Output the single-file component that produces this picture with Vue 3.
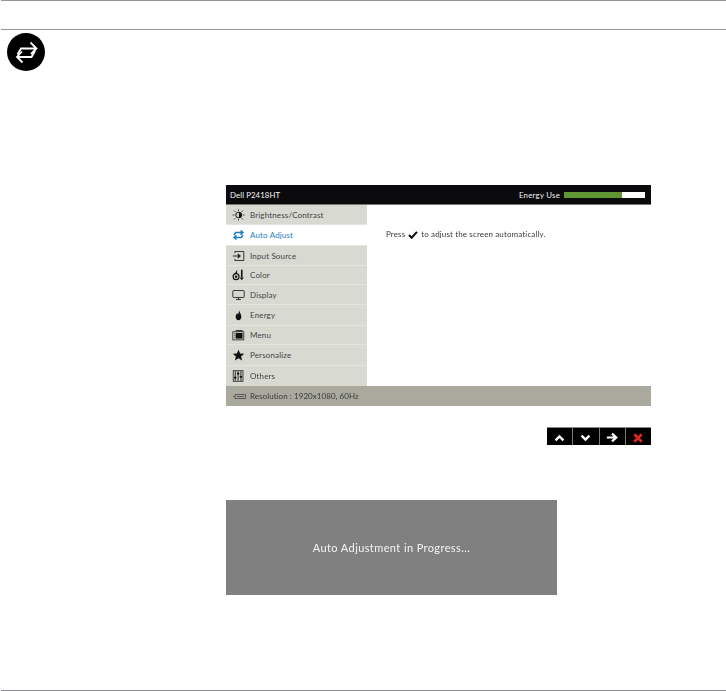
<script setup>
const rows = [
  { name: 'Brightness/Contrast', icon: 'sun' },
  { name: 'Auto Adjust', icon: 'auto', active: true },
  { name: 'Input Source', icon: 'input' },
  { name: 'Color', icon: 'color' },
  { name: 'Display', icon: 'display' },
  { name: 'Energy', icon: 'energy' },
  { name: 'Menu', icon: 'menu' },
  { name: 'Personalize', icon: 'star' },
  { name: 'Others', icon: 'others' },
]
</script>

<template>
  <div class="page">
    <header class="top"></header>
    <div class="badge">
      <svg width="38" height="38" viewBox="0 0 38 38">
        <circle cx="19" cy="19" r="19" fill="#000" />
        <path d="M10.500 21.500 L14 15.500 H29 M23.500 9.500 L29.500 15.500 L24 21" fill="none" stroke="#fff" stroke-width="1.800" />
        <path d="M28 18 L24.500 24 H10 M15 18.500 L10 24 L15.500 29.500" fill="none" stroke="#fff" stroke-width="1.800" />
      </svg>
    </div>
    <section class="osd">
      <div class="osd-head">
        <span>Dell P2418HT</span>
        <div class="energy">
          <span>Energy Use</span>
          <div class="meter"><i></i></div>
        </div>
      </div>
      <div class="osd-body">
        <ul class="menu">
          <li v-for="r in rows" :key="r.name" :class="{ active: r.active }">
            <svg class="ico" width="13" height="12" viewBox="0 0 16 14">
              <g v-if="r.icon === 'sun'">
                <path d="M8.500 3.200A3.800 3.800 0 0 1 8.500 10.800Z" fill="#111" />
                <circle cx="8" cy="7" r="3.400" fill="none" stroke="#111" stroke-width="1.200" />
                <path d="M8 0V2.500M8 11.500V14M0.500 7H3M13 7H15.500M2.500 1.500L4.500 3.500M13.500 1.500L11.500 3.500M2.500 12.500L4.500 10.500M13.500 12.500L11.500 10.500" stroke="#333" stroke-width="1" />
              </g>
              <g v-else-if="r.icon === 'auto'" fill="none" stroke="#1f7fc4" stroke-width="1.800">
                <path d="M2.500 7L4.500 4H13M10.500 1.500L13.500 4L10.500 6.500" />
                <path d="M13.500 7L11.500 10H3M5.500 7.500L2.500 10L5.500 12.500" />
              </g>
              <g v-else-if="r.icon === 'input'" fill="none" stroke="#222" stroke-width="1.100">
                <path d="M3.500 3.500V1.500H14.500V12.500H3.500V10.500" />
                <path d="M1 7H9.500M7 4.500L10 7L7 9.500" stroke-width="1.400" />
              </g>
              <g v-else-if="r.icon === 'color'">
                <circle cx="5" cy="9" r="3.600" fill="none" stroke="#111" stroke-width="1.500" />
                <path d="M6.500 0.500L2.500 6.500L6 5.500Z" fill="#111" />
                <circle cx="5" cy="9" r="1.500" fill="#111" />
                <path d="M12 0.500V10" stroke="#111" stroke-width="2" />
                <path d="M9.500 10H14.500L12 13.500Z" fill="#111" />
              </g>
              <g v-else-if="r.icon === 'display'" fill="none" stroke="#222" stroke-width="1.100">
                <rect x="1" y="1.500" width="14" height="8.500" rx="0.800" />
                <path d="M8 10V12.500M5 12.500H11" />
              </g>
              <path v-else-if="r.icon === 'energy'" d="M8.500 0.500C8.800 3 11.500 5.500 11.500 9C11.500 11.500 10 13.500 8 13.500C6 13.500 4.500 11.500 4.500 9C4.500 7 5.800 6 6.200 4.500C6.800 5 7.200 5.500 7.300 6.500C8.200 5 8.800 3 8.500 0.500Z" fill="#111" />
              <g v-else-if="r.icon === 'menu'">
                <rect x="1" y="3" width="13.500" height="10" fill="none" stroke="#222" />
                <rect x="4.500" y="4.500" width="8.500" height="7" fill="#111" />
                <rect x="4.500" y="1" width="8.500" height="1.500" fill="#222" />
                <path d="M2.500 5H4M2.500 7.500H4M2.500 10H4" stroke="#222" stroke-width=".8" />
              </g>
              <path v-else-if="r.icon === 'star'" d="M8 0.500L10 5.200L15 5.600L11.200 8.900L12.400 13.700L8 11.100L3.600 13.700L4.800 8.900L1 5.600L6 5.200Z" fill="#111" />
              <g v-else>
                <rect x="1.500" y="0.500" width="12" height="13" fill="none" stroke="#222" />
                <path d="M4 1V13M7.500 1V13M11 1V13" stroke="#222" stroke-width="1.200" />
                <path d="M2.500 9H5.500M6 4H9M9.500 8H12.500" stroke="#111" stroke-width="2.200" />
              </g>
            </svg>
            <span>{{ r.name }}</span>
          </li>
        </ul>
        <div class="note">
          <span>Press</span>
          <svg width="10" height="8" viewBox="0 0 11 9"><path d="M1 4.500L4 7.500L10 1" fill="none" stroke="#111" stroke-width="2.400" /></svg>
          <span>to adjust the screen automatically.</span>
        </div>
      </div>
      <div class="status">
        <svg width="13" height="5" viewBox="0 0 13 5"><path d="M0 2.500H1.500M2 .5H12.500V4.500H2ZM4 2.500H11" fill="none" stroke="#444" stroke-width="0.800" /></svg>
        <span>Resolution : 1920x1080, 60Hz</span>
      </div>
    </section>
    <div class="buttons">
      <div class="btn">
        <svg width="11" height="8" viewBox="0 0 14 10"><path d="M2 8L7 3L12 8" fill="none" stroke="#fff" stroke-width="3" /></svg>
      </div>
      <div class="btn">
        <svg width="11" height="8" viewBox="0 0 14 10"><path d="M2 2L7 7L12 2" fill="none" stroke="#fff" stroke-width="3" /></svg>
      </div>
      <div class="btn">
        <svg width="12" height="11" viewBox="0 0 14 12"><path d="M1 6H11M7 1.500L12 6L7 10.500" fill="none" stroke="#fff" stroke-width="2.600" /></svg>
      </div>
      <div class="btn">
        <svg width="10" height="10" viewBox="0 0 12 12"><path d="M1.500 1.500L10.500 10.500M10.500 1.500L1.500 10.500" fill="none" stroke="#d8281f" stroke-width="3.200" /></svg>
      </div>
    </div>
    <div class="progress"><span>Auto Adjustment in Progress...</span></div>
    <footer class="bottom"></footer>
  </div>
</template>

<style scoped>
.page {
  width: 726px;
  height: 691px;
  box-sizing: border-box;
  display: flex;
  flex-direction: column;
  background: #fff;
  font-family: Lato, "Open Sans", sans-serif;
  color: #222;
  overflow: hidden;
}
.top {
  height: 28px;
  border-top: 1px solid #949494;
  border-bottom: 1px solid #949494;
  margin-left: 1px;
}
.badge {
  margin: 3px 0 0 7px;
  height: 38px;
}
.badge svg { display: block; }
.osd {
  width: 425px;
  margin: 114px 0 0 226px;
  font-size: 8px;
  filter: blur(0.3px);
}
.osd-head {
  height: 19px;
  background: #0b0b0d;
  color: #f4f4f4;
  display: flex;
  align-items: center;
  justify-content: space-between;
  padding: 0 6px 0 4px;
  border-bottom: 1px solid #77777a;
  font-size: 7.800px;
  letter-spacing: 0.100px;
}
.energy { display: flex; align-items: center; gap: 4px; }
.energy span { letter-spacing: 0.250px; }
.meter {
  width: 81px;
  height: 6px;
  background: #fff;
}
.meter i {
  display: block;
  width: 58px;
  height: 6px;
  background: #5f9632;
}
.osd-body {
  display: flex;
  height: 181px;
}
.menu {
  width: 141px;
  margin: 0;
  padding: 0;
  list-style: none;
  display: grid;
  grid-template-rows: 20px 21px 20px 19px 20px 21px 19px 21px 20px;
  background: #d8d9d0;
}
.menu li {
  display: flex;
  align-items: center;
  gap: 5px;
  padding-left: 6px;
  font-size: 8px;
  border-bottom: 1px solid #e4e5de;
  letter-spacing: 0.150px;
  color: #444;
}
.menu li:last-child { border-bottom: 0; }
.menu li.active {
  background: #fff;
  color: #2580c4;
}
.ico { flex: none; display: block; }
.note {
  margin: 24px 0 0 19px;
  display: flex;
  align-items: flex-start;
  gap: 3px;
  font-size: 8px;
  letter-spacing: 0.130px;
  line-height: 11px;
  color: #3a3a3a;
}
.note svg { margin-top: 2px; }
.status {
  height: 20px;
  background: #a9a99e;
  display: flex;
  align-items: center;
  gap: 4px;
  padding-left: 7px;
  font-size: 8px;
  letter-spacing: 0.060px;
  color: #3a3a3a;
}
.buttons {
  align-self: flex-start;
  margin: 21px 0 0 547px;
  display: flex;
  gap: 1px;
  width: 104px;
  height: 18px;
  border-top: 1px solid #888;
  box-sizing: border-box;
  background: #777;
}
.btn {
  flex: 1;
  background: #000;
  display: flex;
  align-items: center;
  justify-content: center;
  padding-top: 2px;
  box-sizing: border-box;
}
.progress {
  width: 331px;
  height: 95px;
  margin: 55px 0 0 226px;
  background: #808080;
  color: #f4f4f4;
  display: flex;
  align-items: center;
  justify-content: center;
  font-size: 11px;
  letter-spacing: 0.400px;
  flex: none;
}
.progress span { filter: blur(0.3px); }
.bottom {
  margin-top: auto;
  height: 1px;
  background: #8c8c90;
  margin-left: 1px;
  flex: none;
}
</style>
